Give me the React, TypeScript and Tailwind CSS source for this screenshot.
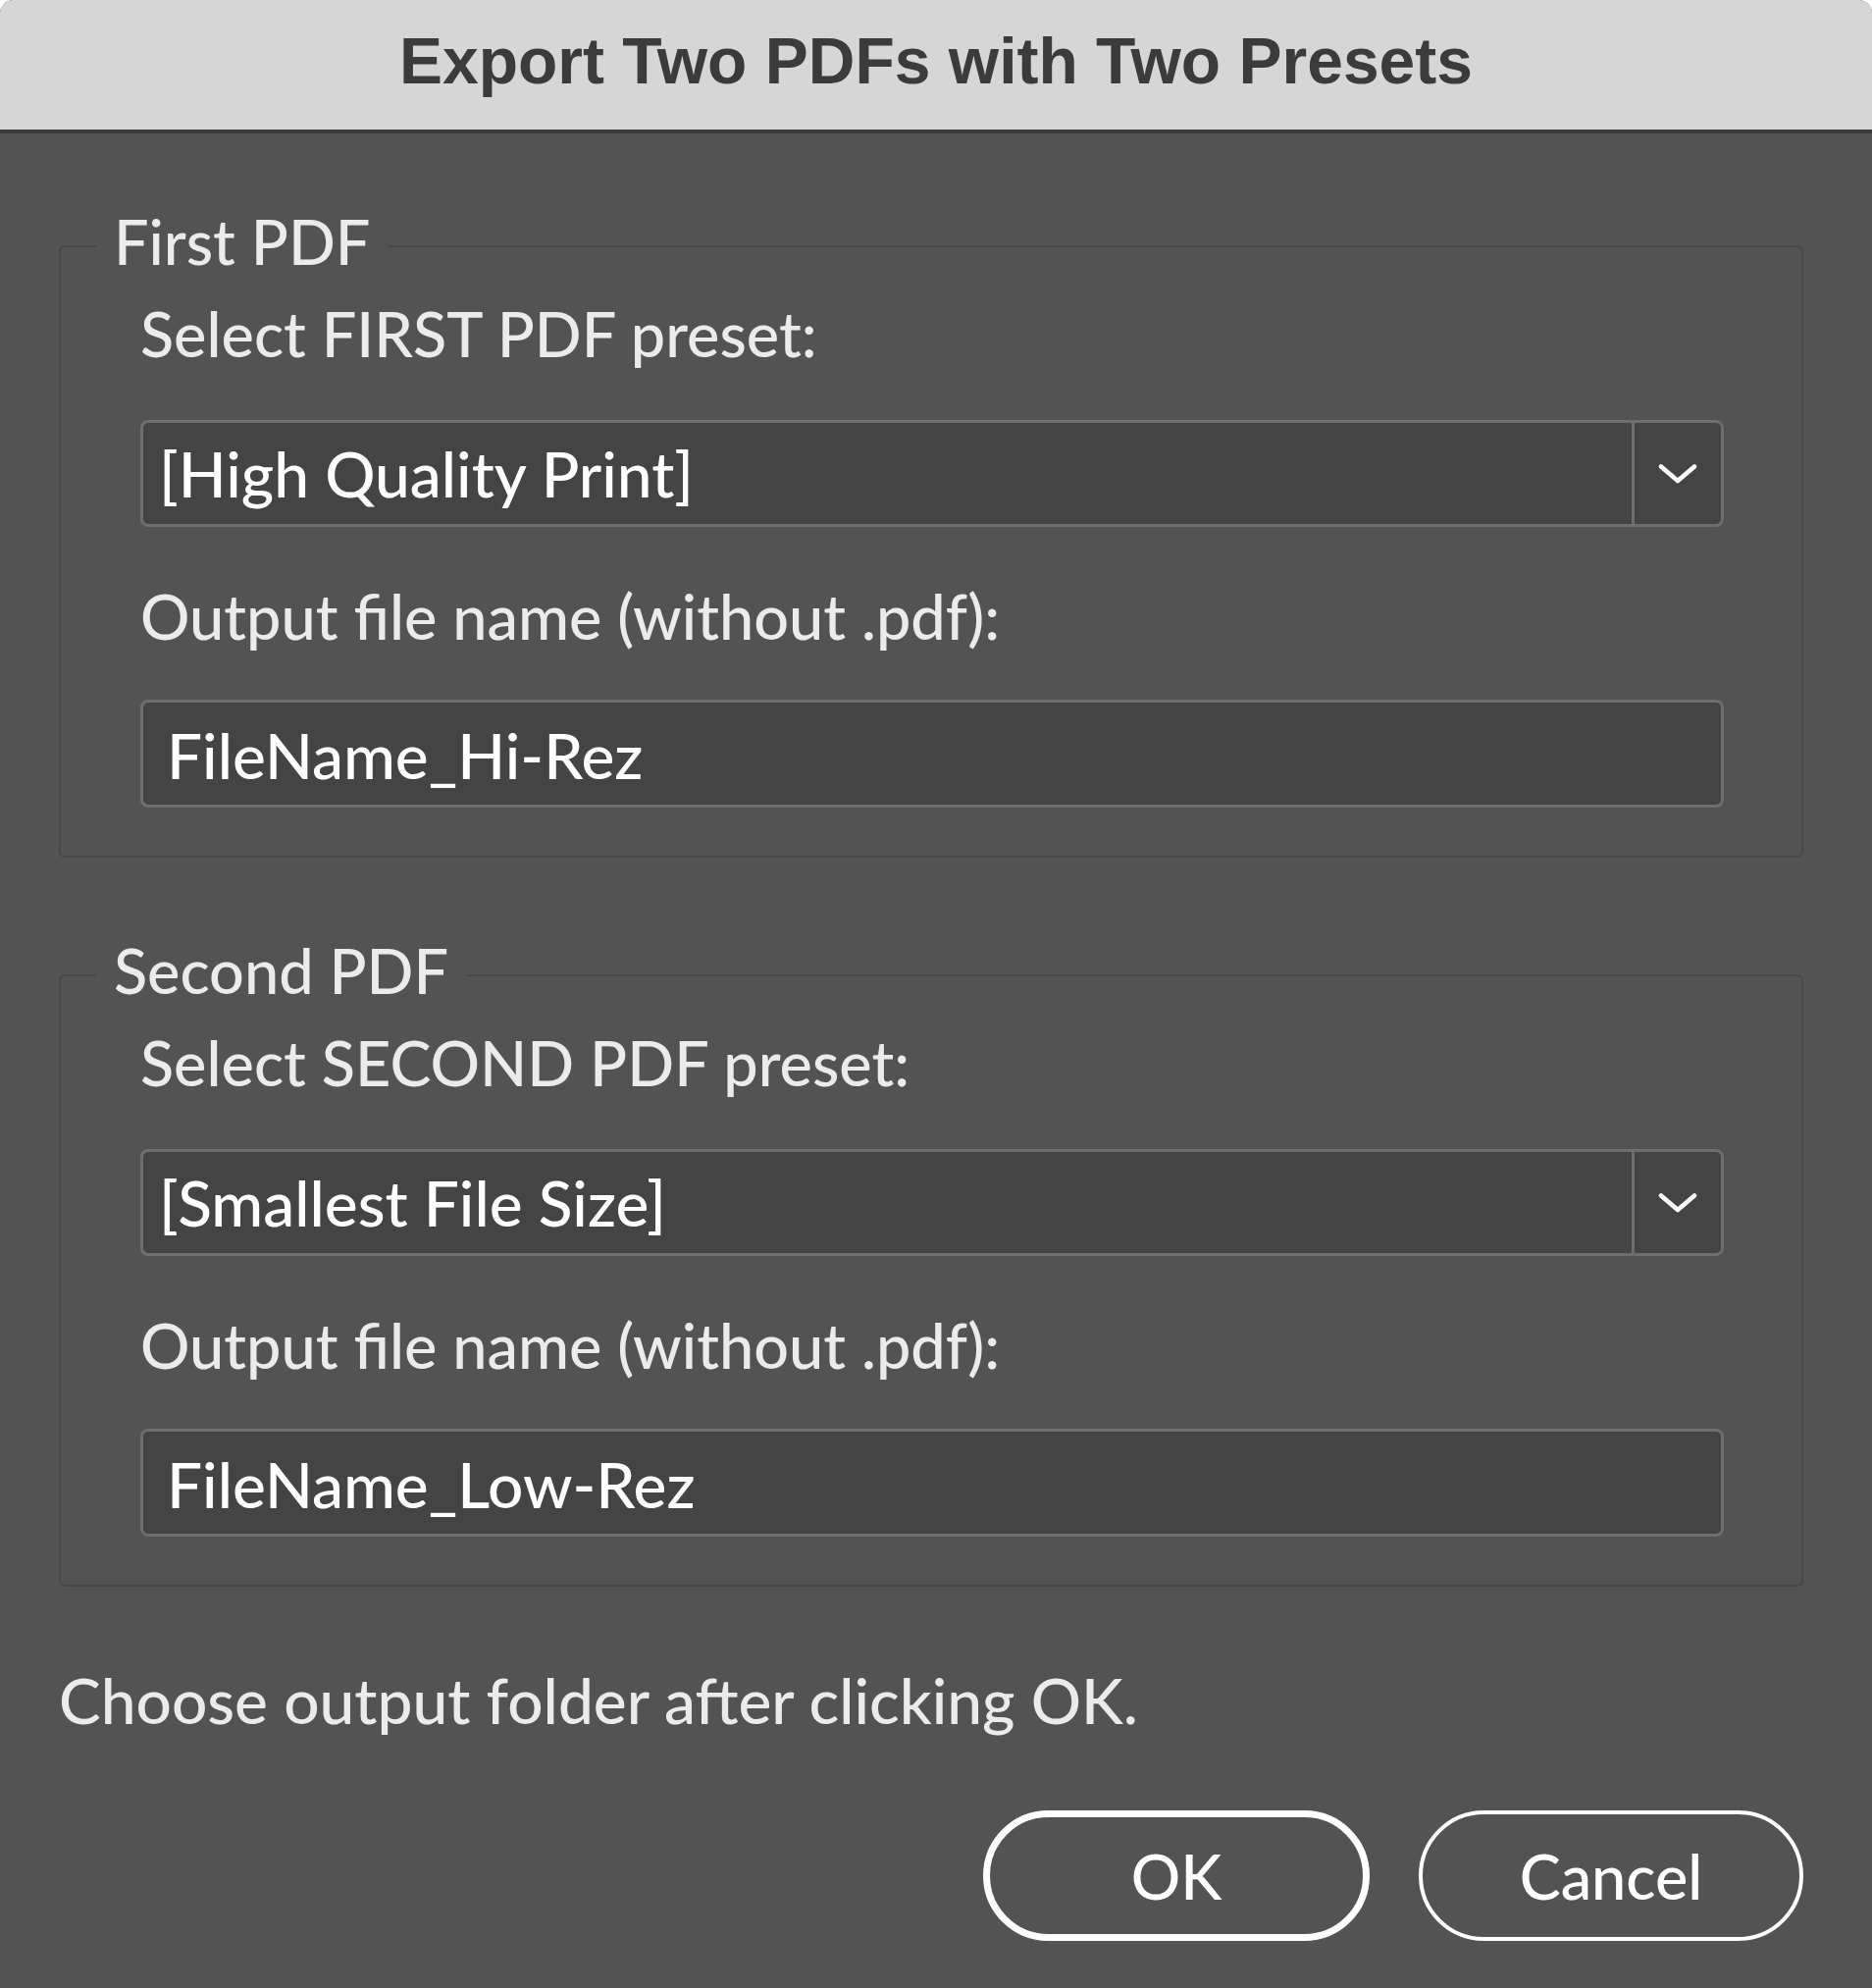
import React from 'react';

const labelCls = "block text-[63px] font-medium leading-none text-[#ebebeb]";

function PresetSelect({ value }: { value: string }) {
  return (
    <div className="mt-[57px] flex h-[109px] rounded-[8px] border-[3px] border-[#6e6e6e] bg-[#444444]">
      <div className="flex flex-1 items-center pl-[16px] text-[64px] font-medium leading-none text-white">
        {value}
      </div>
      <div className="flex w-[91px] items-center justify-center border-l-[3px] border-[#6e6e6e]">
        <svg width="40" height="22" viewBox="0 0 40 22" fill="none">
          <path d="M3 3.5 L20 18 L37 3.5" stroke="#ffffff" strokeWidth="4.6" strokeLinecap="round" strokeLinejoin="round" />
        </svg>
      </div>
    </div>
  );
}

function FileInput({ value }: { value: string }) {
  return (
    <div className="mt-[54px] flex h-[110px] items-center rounded-[8px] border-[3px] border-[#6e6e6e] bg-[#444444] pl-[24px] pt-[4px] text-[64px] font-medium leading-none text-white">
      {value}
    </div>
  );
}

function PdfGroup({
  title,
  selectLabel,
  preset,
  fileName,
  className = '',
}: {
  title: string;
  selectLabel: string;
  preset: string;
  fileName: string;
  className?: string;
}) {
  return (
    <fieldset className={`rounded-[6px] border-2 border-[#484848] pl-[81px] pr-[79px] pb-[49px] ${className}`}>
      <legend className="-ml-[45px] px-[18px] pb-[10px] text-[63px] font-medium leading-none text-[#ebebeb]">
        {title}
      </legend>
      <span className={`mt-[21px] ${labelCls}`}>{selectLabel}</span>
      <PresetSelect value={preset} />
      <span className={`mt-[59px] ${labelCls}`}>Output file name (without .pdf):</span>
      <FileInput value={fileName} />
    </fieldset>
  );
}

export default function App() {
  return (
    <div className="min-h-screen bg-white">
      <div className="flex h-[2026px] w-[1908px] flex-col overflow-hidden rounded-t-[14px] bg-[#535353] font-['Lato',sans-serif]">
        <div className="flex h-[136px] shrink-0 items-center justify-center border-b-4 border-[#3a3a3a] bg-[#d6d6d6] pb-[9px]">
          <h1 className="font-['Liberation_Sans',Arial,sans-serif] text-[66px] font-bold leading-none text-[#3b3b3b]">
            Export Two PDFs with Two Presets
          </h1>
        </div>

        <div className="flex flex-col pl-[60px] pr-[70px] pt-[78px]">
          <PdfGroup
            title="First PDF"
            selectLabel="Select FIRST PDF preset:"
            preset="[High Quality Print]"
            fileName="FileName_Hi-Rez"
          />
          <PdfGroup
            className="mt-[83px]"
            title="Second PDF"
            selectLabel="Select SECOND PDF preset:"
            preset="[Smallest File Size]"
            fileName="FileName_Low-Rez"
          />

          <p className="mt-[84px] text-[64px] font-medium leading-none text-[#ebebeb]">
            Choose output folder after clicking OK.
          </p>

          <div className="mt-[80px] flex justify-end gap-[50px]">
            <button className="flex h-[133px] w-[394px] items-center justify-center rounded-full border-[7px] border-white text-[63px] font-medium leading-none text-white">
              OK
            </button>
            <button className="flex h-[133px] w-[392px] items-center justify-center rounded-full border-4 border-white text-[63px] font-medium leading-none text-white">
              Cancel
            </button>
          </div>
        </div>
      </div>
    </div>
  );
}
